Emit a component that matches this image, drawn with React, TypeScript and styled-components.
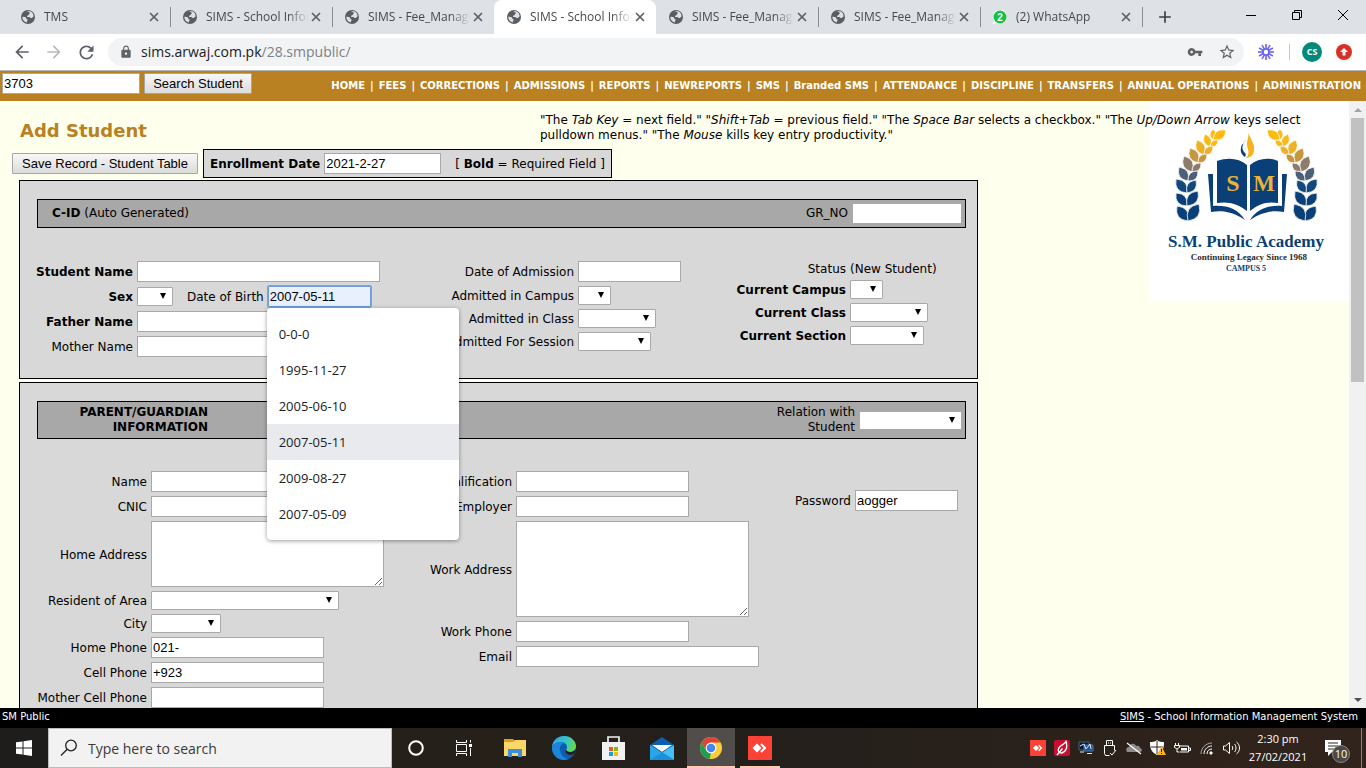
import React from "react";
import styled, { createGlobalStyle, css } from "styled-components";
import { FiX } from "react-icons/fi";
import { MdLock, MdVpnKey, MdStarBorder, MdArrowBack, MdArrowForward, MdRefresh, MdAdd } from "react-icons/md";

const page = `"DejaVu Sans", Verdana, sans-serif`;
const system = `"Open Sans", "Segoe UI", sans-serif`;
const control = `"Liberation Sans", Arial, sans-serif`;
const brown = "#b98121";
const navy = "#0a3f78";

const GlobalStyle = createGlobalStyle`
  * { box-sizing: border-box; }
  body { margin: 0; font-family: ${page}; font-size: 12px; color: #000; }
  button, input, select, textarea { font-family: ${control}; font-size: 13px; }
`;

const Screen = styled.div`
  display: flex;
  flex-direction: column;
  height: 100vh;
  overflow: hidden;
`;

/* ---------- Browser chrome ---------- */

const TabStrip = styled.header`
  display: flex;
  flex: none;
  height: 34px;
  padding-left: 8px;
  background: #dee1e6;
  font-family: ${system};
`;

const TabItem = styled.div<{ $active?: boolean; $divided?: boolean }>`
  position: relative;
  display: flex;
  align-items: center;
  flex: 0 1 162px;
  min-width: 0;
  padding: 0 8px 0 13px;
  ${(p) => p.$active && css`background: #fff; border-radius: 8px 8px 0 0;`}
  ${(p) => p.$divided && css`
    &::after {
      content: "";
      position: absolute;
      right: -1px;
      top: 7px;
      height: 20px;
      width: 1px;
      background: #8a8d92;
    }
  `}
`;

const TabTitle = styled.span`
  flex: 1;
  min-width: 0;
  margin-left: 9px;
  overflow: hidden;
  white-space: nowrap;
  font-size: 12px;
  line-height: 16px;
  color: #45494d;
  mask-image: linear-gradient(to right, #000 80%, transparent);
`;

const IconButton = styled.button<{ $size?: number; $color?: string }>`
  display: flex;
  align-items: center;
  justify-content: center;
  flex: none;
  width: ${(p) => p.$size ?? 16}px;
  height: ${(p) => p.$size ?? 16}px;
  padding: 0;
  border: 0;
  background: none;
  color: ${(p) => p.$color ?? "#5f6368"};
`;

const NewTab = styled(IconButton)`
  margin: 5px 0 0 11px;
`;

const WindowButtons = styled.div`
  display: flex;
  margin-left: auto;
`;

const WindowButton = styled.button`
  width: 46px;
  height: 30px;
  padding: 0;
  border: 0;
  background: none;
`;

const Toolbar = styled.div`
  display: flex;
  align-items: center;
  flex: none;
  height: 37px;
  padding: 0 8px 0 10px;
  gap: 8px;
  background: #fff;
  border-bottom: 1px solid #b3b5b8;
`;

const Omnibox = styled.div`
  display: flex;
  align-items: center;
  flex: 1;
  height: 28px;
  margin-left: 2px;
  padding: 0 1px 0 11px;
  border-radius: 14px;
  background: #f1f3f4;
  color: #5f6368;
`;

const Address = styled.span`
  flex: 1;
  margin-left: 8px;
  font: 14px/20px ${system};
  color: #7d8186;
  b { font-weight: 400; color: #202124; }
`;

const ToolDivider = styled.span`
  width: 1px;
  height: 16px;
  margin: 0 4px 0 1px;
  background: #c6c8cb;
`;

const Avatar = styled.span`
  display: flex;
  align-items: center;
  justify-content: center;
  width: 20px;
  height: 20px;
  border-radius: 50%;
  background: #00897b;
  color: #fff;
  font: 700 9px/20px ${system};
`;

/* ---------- Site header ---------- */

const SiteHeader = styled.div`
  display: flex;
  align-items: flex-start;
  flex: none;
  height: 30px;
  padding: 2px 5px 0 2px;
  background: ${brown};
`;

const SiteNav = styled.nav`
  margin-left: auto;
  padding-top: 6px;
  font-size: 10px;
  font-weight: 700;
  line-height: 14px;
  color: #fff;
  white-space: nowrap;
  a { color: #fff; text-decoration: none; }
`;

const NavDivider = styled.span`
  margin: 0 5px;
`;

const TextInput = styled.input<{ $w: number; $focused?: boolean }>`
  width: ${(p) => p.$w}px;
  height: 21px;
  padding: 0 1px;
  border: 1px solid #a9a9a9;
  background: #fff;
  color: #000;
  ${(p) => p.$focused && css`
    border-color: #6f9ae0;
    outline: 1px solid #76a3e8;
    border-radius: 1px;
    background: #e8f0fe;
  `}
`;

const PushButton = styled.button<{ $w: number }>`
  width: ${(p) => p.$w}px;
  height: 21px;
  padding: 0;
  border: 1px solid #a6a6a6;
  border-radius: 1px;
  background: linear-gradient(#f7f7f7, #dcdcdc);
  color: #000;
  white-space: nowrap;
`;

const SearchButton = styled(PushButton)`
  margin-left: 4px;
`;

/* ---------- Page ---------- */

const Viewport = styled.div`
  display: flex;
  flex: 1;
  min-height: 0;
  background: #ffffee;
`;

const Page = styled.main`
  position: relative;
  flex: 1;
  min-width: 0;
  overflow: hidden;
  padding: 12px 19px 0 12px;
`;

const Crest = styled.svg`
  position: absolute;
  top: 0;
  right: 0;
  width: 200px;
  height: 200px;
`;

const PageHead = styled.div`
  position: relative;
  display: flex;
  height: 36px;
`;

const Title = styled.h1`
  flex: 0 0 528px;
  margin: 0;
  padding: 7px 0 0 8px;
  font-size: 18px;
  line-height: 22px;
  color: ${brown};
`;

const Hints = styled.p`
  margin: 0;
  line-height: 15px;
`;

const SaveRow = styled.div`
  display: flex;
  align-items: center;
  gap: 5px;
  margin-bottom: 2px;
`;

const Enrollment = styled.div`
  display: flex;
  align-items: center;
  gap: 4px;
  padding: 3px 6px;
  border: 1px solid #000;
  background: #d8d8d8;
`;

const RequiredNote = styled.span`
  margin-left: 10px;
`;

const Section = styled.section<{ $gap: number }>`
  display: flex;
  flex-direction: column;
  gap: ${(p) => p.$gap}px;
  max-width: 959px;
  margin: 0 0 3px 7px;
  padding: 18px 11px 21px 17px;
  border: 1px solid #000;
  background: #d8d8d8;
`;

const Bar = styled.div`
  display: flex;
  align-items: center;
  gap: 4px;
  padding: 3px 3px 3px 4px;
  border: 1px solid #000;
  background: #a8a8a8;
  line-height: 15px;
`;

const BarTitle = styled.span<{ $w?: number; $inset?: number }>`
  ${(p) => p.$w && css`width: ${p.$w}px; text-align: right;`}
  margin-right: auto;
  padding-left: ${(p) => p.$inset ?? 0}px;
`;

const BarLabel = styled.label<{ $w?: number }>`
  ${(p) => p.$w && css`width: ${p.$w}px;`}
  text-align: right;
`;

const Columns = styled.div<{ $cols: string }>`
  display: grid;
  grid-template-columns: ${(p) => p.$cols};
  align-items: start;
`;

const Fields = styled.div<{ $label: number; $offset?: number }>`
  display: grid;
  grid-template-columns: ${(p) => p.$label}px auto;
  gap: 4px;
  align-items: center;
  justify-content: start;
  padding-top: ${(p) => p.$offset ?? 0}px;
`;

const Label = styled.label<{ $bold?: boolean }>`
  justify-self: end;
  padding-top: 2px;
  line-height: 15px;
  white-space: nowrap;
  font-weight: ${(p) => (p.$bold ? 700 : 400)};
`;

const Plain = styled.span<{ $right?: boolean }>`
  padding-top: 1px;
  line-height: 14px;
  ${(p) => p.$right && css`justify-self: end;`}
`;

const Inline = styled.div`
  display: flex;
  align-items: center;
  gap: 4px;
`;

const BirthLabel = styled(Label)`
  margin-left: 10px;
`;

const SelectBox = styled.span<{ $w: number }>`
  position: relative;
  display: block;
  width: ${(p) => p.$w}px;
  height: 19px;
  &::after {
    content: "";
    position: absolute;
    right: 7px;
    top: 6px;
    border: 3px solid transparent;
    border-top: 6px solid #000;
    border-bottom: 0;
  }
`;

const NativeSelect = styled.select`
  appearance: none;
  display: block;
  width: 100%;
  height: 19px;
  padding: 0 4px;
  border: 1px solid #a9a9a9;
  border-radius: 1px;
  background: #fff;
`;

const TextBox = styled.textarea<{ $w: number; $h: number }>`
  display: block;
  width: ${(p) => p.$w}px;
  height: ${(p) => p.$h}px;
  border: 1px solid #a9a9a9;
  resize: both;
`;

const Anchor = styled.div`
  position: relative;
  display: flex;
`;

const Suggestions = styled.ul`
  position: absolute;
  z-index: 2;
  top: 22px;
  left: -1px;
  width: 192px;
  margin: 0;
  padding: 8px 0;
  list-style: none;
  border-radius: 4px;
  background: #fff;
  box-shadow: 0 1px 4px rgba(0, 0, 0, 0.4);
`;

const Suggestion = styled.li<{ $hot?: boolean }>`
  padding: 0 12px;
  font: 13px/36px ${system};
  color: #202124;
  background: ${(p) => (p.$hot ? "#e8eaed" : "transparent")};
`;

const Scrollbar = styled.div`
  display: flex;
  flex-direction: column;
  align-items: center;
  justify-content: space-between;
  flex: none;
  width: 17px;
  background: #f1f1f1;
`;

const ScrollTrack = styled.div`
  flex: 1;
  width: 13px;
`;

const ScrollThumb = styled.div`
  height: 46%;
  background: #c1c1c1;
`;

const ScrollArrow = styled.span<{ $down?: boolean }>`
  height: 17px;
  padding-top: 7px;
  &::before {
    content: "";
    display: block;
    border: 4px solid transparent;
    ${(p) =>
      p.$down
        ? css`border-top-color: #505050; border-bottom: 0;`
        : css`border-bottom-color: #a3a3a3; border-top: 0;`}
  }
`;

const StatusBar = styled.footer`
  display: flex;
  justify-content: space-between;
  flex: none;
  height: 20px;
  padding: 0 8px 0 2px;
  background: #000;
  color: #fff;
  font-size: 10px;
  line-height: 17px;
  a { color: #fff; }
`;

/* ---------- Taskbar ---------- */

const Taskbar = styled.div`
  display: flex;
  flex: none;
  height: 40px;
  background: linear-gradient(90deg, #1e1d1c, #262019 35%, #231f1b 55%, #32241c);
  font-family: ${system};
  color: #fff;
`;

const TaskButton = styled.button<{ $active?: boolean }>`
  position: relative;
  display: flex;
  align-items: center;
  justify-content: center;
  flex: none;
  width: 48px;
  height: 40px;
  padding: 0;
  border: 0;
  background: ${(p) => (p.$active ? "#514d4a" : "none")};
`;

const Running = styled.span<{ $wide?: boolean }>`
  position: absolute;
  bottom: 0;
  left: ${(p) => (p.$wide ? 0 : 4)}px;
  right: ${(p) => (p.$wide ? 0 : 4)}px;
  height: 2px;
  background: #ffc9b3;
`;

const Pinned = styled.div`
  display: flex;
  gap: 1px;
  margin-left: 3px;
`;

const TaskSearch = styled.label`
  display: flex;
  align-items: center;
  flex: 0 1 344px;
  min-width: 0;
  padding: 0 11px;
  gap: 10px;
  border: 1px solid #bcbcbc;
  background: #f2f2f2;
  color: #222;
`;

const TaskSearchInput = styled.input`
  flex: 1;
  min-width: 0;
  padding: 0;
  border: 0;
  background: none;
  font-family: ${system};
  font-size: 14px;
  &::placeholder { color: #3a3a3a; opacity: 1; }
`;

const Tray = styled.div`
  display: flex;
  align-items: center;
  gap: 8px;
  margin-left: auto;
  svg { display: block; }
`;

const Clock = styled.div`
  width: 60px;
  text-align: center;
  white-space: nowrap;
  font-size: 11px;
  line-height: 18px;
`;

const Notices = styled.div`
  width: 46px;
  height: 40px;
  padding: 8px 0 0 9px;
  border-right: 1px solid #8b817a;
  margin-right: 4px;
`;

/* ---------- Drawings ---------- */

const Globe = () => (
  <svg width="14" height="14" viewBox="0 0 14 14">
    <circle cx="7" cy="7" r="7" fill="#5a5e63" />
    <path d="M6.2 1.300C7 2.300 8 1.700 8.600 2.600c.5 1-.6 1.300-.8 2.100-.3.900-1.900.5-1.900 1.500 0 .8 1.600.6 2.300.9 1 .4 1.200 1.100 2.300 1 .9-.1.800-1.500 2-1.400.4-3-1.900-5.600-4.800-5.700Z" fill="#dee1e6" />
    <path d="M1.300 6.800c1.300.1 2.600.1 3.500.7.8.6.300 1.400 1.200 1.800.9.300.8 1 .3 1.500-.5.600-.5 1-.4 1.700C3.100 12 1.300 9.600 1.300 6.800Z" fill="#dee1e6" />
  </svg>
);

const WhatsAppBadge = () => (
  <svg width="14" height="14" viewBox="0 0 14 14">
    <path d="M0 14 1 10.300A7 7 0 1 1 4 13Z" fill="#fff" />
    <circle cx="7" cy="7" r="6.500" fill="#13c143" />
    <text x="7" y="10.500" fontSize="10" fontWeight="700" fill="#fff" textAnchor="middle" fontFamily="Liberation Sans">2</text>
  </svg>
);

/* Each pair of leaves: stem point, tip of the outer leaf, tip of the inner leaf, colour. */
const leafPairs: [number, number, number, number, number, number, string][] = [
  [39, 120, 28, 105, 50, 103, "#0a3f78"],
  [38, 105, 27, 92, 49, 90, "#0a3f78"],
  [38, 92, 27, 78, 47, 79, "#12487c"],
  [39, 80, 30, 66, 49, 70, "#4c6078"],
  [43, 71, 35, 55, 52, 62, "#8d7c6c"],
  [49, 62, 41, 47, 58, 53, "#c4983f"],
  [55, 54, 48, 39, 64, 45, "#efb025"],
  [61, 46, 56, 33, 69, 39, "#fab917"],
  [64, 39, 64, 28, 77, 29, "#fdbb10"],
];

const leafPath = (x: number, y: number, tx: number, ty: number) => {
  const mx = (x + tx) / 2, my = (y + ty) / 2, dx = (tx - x) * 0.55, dy = (ty - y) * 0.55;
  return `M${x} ${y}Q${mx - dy} ${my + dx} ${tx} ${ty}Q${mx + dy} ${my - dx} ${x} ${y}Z`;
};

const Laurel = () => (
  <g stroke="#fff" strokeWidth="0.8">
    {[...leafPairs].reverse().map(([x, y, ox, oy, ix, iy, color]) => (
      <g key={y} fill={color}>
        <path d={leafPath(x, y, ox, oy)} />
        <path d={leafPath(x, y, ix, iy)} />
      </g>
    ))}
  </g>
);

const SchoolCrest = () => (
  <Crest viewBox="0 0 200 200" role="img" aria-label="S.M. Public Academy">
    <rect width="200" height="200" fill="#fff" />
    <Laurel />
    <g transform="translate(195 0) scale(-1 1)"><Laurel /></g>
    <path d="M99 32c4 8 7 12 6 18-1 5-5 7-8 7 5-5 1-9 1-14 0-4 2-7 1-11Z" fill="#f6b319" />
    <path d="M97 39c-4 5-5 9-1 13 1 1 1 2 0 4-3-2-5-5-4-9 0-4 4-5 5-8Z" fill={navy} />
    <path d="M68 60c11-4 22-3 30 4v46c-8-7-19-10-30-8ZM101 64c8-7 19-8 28-4v42c-11-2-20 1-28 8Z" fill={navy} />
    <path d="M59 73h5v32c14-1 25 3 32 14-12-8-22-10-34-8ZM138 73h-5v32c-14-1-25 3-32 14 12-8 22-10 34-8Z" fill={navy} />
    <g fontFamily="Liberation Serif" fontWeight="700" textAnchor="middle">
      <text x="84" y="90" fontSize="24" fill="#e8b33a">S</text>
      <text x="115" y="90" fontSize="23" fill="#e8b33a">M</text>
      <text x="97" y="146" fontSize="17" fill={navy}>S.M. Public Academy</text>
      <text x="100" y="159" fontSize="9" fill="#2b2b2b">Continuing Legacy Since 1968</text>
      <text x="97" y="170" fontSize="8" fill={navy}>CAMPUS 5</text>
    </g>
  </Crest>
);

const AnyDesk = ({ size }: { size: number }) => (
  <svg width={size} height={size} viewBox="0 0 24 24">
    <rect width="24" height="24" fill="#fb4236" />
    <path d="m9 7.500 4.500 4.500-4.500 4.500L4.500 12Z" fill="#fff" />
    <path d="m13 8 4 4-4 4" fill="none" stroke="#fff" strokeWidth="2" />
  </svg>
);

const Explorer = () => (
  <svg width="22" height="18" viewBox="0 0 22 18">
    <path d="M0 0h9l2 2h10v14H0Z" fill="#e5a00d" />
    <path d="M0 3h9l2-2h11v16H0Z" fill="#fbd669" />
    <path d="M4 18v-8h14v8h-4v-4H8v4Z" fill="#3d8fd6" />
  </svg>
);

const Edge = () => (
  <svg width="24" height="24" viewBox="0 0 24 24">
    <defs>
      <linearGradient id="edgeTop" x1="0" x2="1" y1=".2" y2=".5">
        <stop offset="0" stopColor="#2fa8e8" />
        <stop offset=".55" stopColor="#35c3c9" />
        <stop offset="1" stopColor="#63dc4f" />
      </linearGradient>
    </defs>
    <circle cx="12" cy="12" r="12" fill="#0f5cae" />
    <path d="M0 12C0 5 5 0 12 0s12 5 12 10c0 4-3 6-6 6-3 0-4-1-4-2s1-1 1-3c0-3-3-5-6-5-5 0-9 3-9 6Z" fill="url(#edgeTop)" />
    <path d="M0 12c1-4 5-6 9-6 1 0 3 .500 4 1.500C9 7 7 11 8 15c1 4 4 7 8 8.300C8 26 0 20 0 12Z" fill="#1b86d8" />
    <path d="M14.300 13.500c0 1.600 1.700 2.500 3.700 2.500 3 0 5-1.500 6-3.500-.2 2.500-1 4-2 5.500-4 2-9 .5-8.500-3.500Z" fill="#24211c" />
  </svg>
);

const Store = () => (
  <svg width="23" height="24" viewBox="0 0 23 24">
    <path d="M6 7V1h11v6" fill="none" stroke="#f1f1f1" strokeWidth="1.700" />
    <path d="M0 6h23v18H0Z" fill="#f1f1f1" />
    <path d="M7 11h4v4H7Z" fill="#f35325" /><path d="M12 11h4v4h-4Z" fill="#81bc06" />
    <path d="M7 16h4v4H7Z" fill="#05a6f0" /><path d="M12 16h4v4h-4Z" fill="#ffba08" />
  </svg>
);

const Mail = () => (
  <svg width="24" height="23" viewBox="0 0 24 23">
    <path d="M0 8 12 0l12 8v5H0Z" fill="#0b5fae" />
    <path d="M2 8h20l-10 7Z" fill="#f4f8fb" />
    <path d="M0 8 24 23H0Z" fill="#2aa5ea" />
    <path d="M24 8v15L12 15.500Z" fill="#41c1f5" />
    <path d="m0 23 12-7.500L24 23Z" fill="#1b90dd" />
  </svg>
);

const Chrome = () => (
  <svg width="22" height="22" viewBox="0 0 22 22">
    <circle cx="11" cy="11" r="11" fill="#fccd3b" />
    <path d="M1.500 5.500A11 11 0 0 1 20.500 5.500H11L6.200 13.700Z" fill="#dc4437" />
    <path d="M1.500 5.500 6.200 13.700 11 16.500l-.9 5.500A11 11 0 0 1 1.500 5.500Z" fill="#1b9d57" />
    <path d="m11 16.500 4.800-2.700L10.500 22h-.9Z" fill="#fccd3b" />
    <circle cx="11" cy="11" r="5.400" fill="#fff" />
    <circle cx="11" cy="11" r="4.300" fill="#4486f4" />
  </svg>
);

/* ---------- Pieces ---------- */

const Select = ({ id, w, label }: { id: string; w: number; label?: string }) => (
  <SelectBox $w={w}>
    <NativeSelect id={id} aria-label={label} defaultValue=""><option value="" /></NativeSelect>
  </SelectBox>
);

type FieldProps = { id: string; label: string; bold?: boolean; children: React.ReactNode };
const Field = ({ id, label, bold, children }: FieldProps) => (
  <>
    <Label htmlFor={id} $bold={bold}>{label}</Label>
    {children}
  </>
);

const tabs = [
  { title: "TMS", divided: true },
  { title: "SIMS - School Information", divided: true },
  { title: "SIMS - Fee_Management" },
  { title: "SIMS - School Information", active: true },
  { title: "SIMS - Fee_Management", divided: true },
  { title: "SIMS - Fee_Management", divided: true },
  { title: "(2) WhatsApp", divided: true, whatsapp: true },
];

const navItems = [
  "HOME", "FEES", "CORRECTIONS", "ADMISSIONS", "REPORTS", "NEWREPORTS", "SMS", "Branded SMS",
  "ATTENDANCE", "DISCIPLINE", "TRANSFERS", "ANNUAL OPERATIONS", "ADMINISTRATION",
];

const birthDates = ["0-0-0", "1995-11-27", "2005-06-10", "2007-05-11", "2009-08-27", "2007-05-09"];

export default function App() {
  return (
    <Screen>
      <GlobalStyle />
      <TabStrip>
        {tabs.map((t, i) => (
          <TabItem key={i} $active={t.active} $divided={t.divided}>
            {t.whatsapp ? <WhatsAppBadge /> : <Globe />}
            <TabTitle>{t.title}</TabTitle>
            <IconButton aria-label="Close tab"><FiX size={14} strokeWidth={3} /></IconButton>
          </TabItem>
        ))}
        <NewTab $size={24} $color="#3c4043" aria-label="New tab"><MdAdd size={20} /></NewTab>
        <WindowButtons>
          <WindowButton aria-label="Minimise">
            <svg width="10" height="10"><path d="M0 5.500h10" stroke="#000" /></svg>
          </WindowButton>
          <WindowButton aria-label="Restore">
            <svg width="10" height="10" fill="none" stroke="#000"><path d="M.5 2.500h7v7h-7ZM2.500 2.500v-2h7v7h-2" /></svg>
          </WindowButton>
          <WindowButton aria-label="Close">
            <svg width="10" height="10"><path d="m0 0 10 10M10 0 0 10" stroke="#000" /></svg>
          </WindowButton>
        </WindowButtons>
      </TabStrip>

      <Toolbar>
        <IconButton $size={24} aria-label="Back"><MdArrowBack size={20} /></IconButton>
        <IconButton $size={24} $color="#b9bbbe" aria-label="Forward"><MdArrowForward size={20} /></IconButton>
        <IconButton $size={24} aria-label="Reload"><MdRefresh size={21} /></IconButton>
        <Omnibox>
          <MdLock size={14} />
          <Address><b>sims.arwaj.com.pk</b>/28.smpublic/</Address>
          <IconButton $size={32} aria-label="Passwords"><MdVpnKey size={16} /></IconButton>
          <IconButton $size={32} aria-label="Bookmark"><MdStarBorder size={18} /></IconButton>
        </Omnibox>
        <IconButton $size={28} $color="#6a63f0" aria-label="Extension">
          <svg width="16" height="16" viewBox="-8 -8 16 16" stroke="currentColor" strokeWidth="1.600">
            {[0, 30, 60, 90, 120, 150, 180, 210, 240, 270, 300, 330].map((a) => (
              <path key={a} d="M0-3V-8" transform={`rotate(${a})`} />
            ))}
            <circle r="3" fill="none" />
          </svg>
        </IconButton>
        <ToolDivider />
        <Avatar>CS</Avatar>
        <IconButton $size={28} aria-label="Update">
          <svg width="16" height="16" viewBox="0 0 16 16">
            <circle cx="8" cy="8" r="8" fill="#d93025" />
            <path d="m8 4 4 4H9.500v3.500h-3V8H4Z" fill="#fff" />
          </svg>
        </IconButton>
      </Toolbar>

      <SiteHeader>
        <TextInput $w={138} defaultValue="3703" aria-label="Student number" />
        <SearchButton $w={108}>Search Student</SearchButton>
        <SiteNav>
          {navItems.map((n, i) => (
            <React.Fragment key={n}>
              {i > 0 && <NavDivider>|</NavDivider>}
              <a href="#">{n}</a>
            </React.Fragment>
          ))}
        </SiteNav>
      </SiteHeader>

      <Viewport>
        <Page>
          <SchoolCrest />
          <PageHead>
            <Title>Add Student</Title>
            <Hints>
              "The <i>Tab Key</i> = next field." "<i>Shift+Tab</i> = previous field." "The <i>Space Bar</i> selects a
              checkbox." "The <i>Up/Down Arrow</i> keys select pulldown menus." "The <i>Mouse</i> kills key entry
              productivity."
            </Hints>
          </PageHead>

          <SaveRow>
            <PushButton $w={186}>Save Record - Student Table</PushButton>
            <Enrollment>
              <Label htmlFor="enrollment" $bold>Enrollment Date</Label>
              <TextInput $w={117} id="enrollment" defaultValue="2021-2-27" />
              <RequiredNote>[ <b>Bold</b> = Required Field ]</RequiredNote>
            </Enrollment>
          </SaveRow>

          <Section $gap={33}>
            <Bar>
              <BarTitle $inset={10}><b>C-ID</b> (Auto Generated)</BarTitle>
              <BarLabel htmlFor="grno">GR_NO</BarLabel>
              <TextInput $w={110} id="grno" />
            </Bar>
            <Columns $cols="410px 286px 1fr">
              <Fields $label={96}>
                <Field id="student" label="Student Name" bold><TextInput $w={243} id="student" /></Field>
                <Field id="sex" label="Sex" bold>
                  <Inline>
                    <Select id="sex" w={36} />
                    <BirthLabel htmlFor="dob">Date of Birth</BirthLabel>
                    <Anchor>
                      <TextInput $w={103} $focused id="dob" defaultValue="2007-05-11" />
                      <Suggestions>
                        {birthDates.map((d) => <Suggestion key={d} $hot={d === "2007-05-11"}>{d}</Suggestion>)}
                      </Suggestions>
                    </Anchor>
                  </Inline>
                </Field>
                <Field id="father" label="Father Name" bold><TextInput $w={243} id="father" /></Field>
                <Field id="mother" label="Mother Name"><TextInput $w={243} id="mother" /></Field>
              </Fields>
              <Fields $label={127}>
                <Field id="admission" label="Date of Admission"><TextInput $w={103} id="admission" /></Field>
                <Field id="inCampus" label="Admitted in Campus"><Select id="inCampus" w={33} /></Field>
                <Field id="inClass" label="Admitted in Class"><Select id="inClass" w={78} /></Field>
                <Field id="session" label="Admitted For Session"><Select id="session" w={73} /></Field>
              </Fields>
              <Fields $label={113}>
                <Plain $right>Status</Plain>
                <Plain>(New Student)</Plain>
                <Field id="campus" label="Current Campus" bold><Select id="campus" w={33} /></Field>
                <Field id="class" label="Current Class" bold><Select id="class" w={78} /></Field>
                <Field id="section" label="Current Section" bold><Select id="section" w={74} /></Field>
              </Fields>
            </Columns>
          </Section>

          <Section $gap={32}>
            <Bar>
              <BarTitle $w={166}><b>PARENT/GUARDIAN INFORMATION</b></BarTitle>
              <BarLabel $w={90} htmlFor="relation">Relation with Student</BarLabel>
              <Select id="relation" w={103} />
            </Bar>
            <Columns $cols="390px 363px 1fr">
              <Fields $label={110}>
                <Field id="name" label="Name"><TextInput $w={173} id="name" /></Field>
                <Field id="cnic" label="CNIC"><TextInput $w={173} id="cnic" /></Field>
                <Field id="home" label="Home Address"><TextBox $w={233} $h={66} id="home" /></Field>
                <Field id="area" label="Resident of Area"><Select id="area" w={188} /></Field>
                <Field id="city" label="City"><Select id="city" w={70} /></Field>
                <Field id="homePhone" label="Home Phone"><TextInput $w={173} id="homePhone" defaultValue="021-" /></Field>
                <Field id="cell" label="Cell Phone"><TextInput $w={173} id="cell" defaultValue="+923" /></Field>
                <Field id="motherCell" label="Mother Cell Phone"><TextInput $w={173} id="motherCell" /></Field>
              </Fields>
              <Fields $label={85}>
                <Field id="qualification" label="Qualification"><TextInput $w={173} id="qualification" /></Field>
                <Field id="employer" label="Employer"><TextInput $w={173} id="employer" /></Field>
                <Field id="work" label="Work Address"><TextBox $w={233} $h={96} id="work" /></Field>
                <Field id="workPhone" label="Work Phone"><TextInput $w={173} id="workPhone" /></Field>
                <Field id="email" label="Email"><TextInput $w={243} id="email" /></Field>
              </Fields>
              <Fields $label={61} $offset={19}>
                <Field id="password" label="Password"><TextInput $w={103} id="password" defaultValue="aogger" /></Field>
              </Fields>
            </Columns>
          </Section>
        </Page>
        <Scrollbar>
          <ScrollArrow />
          <ScrollTrack><ScrollThumb /></ScrollTrack>
          <ScrollArrow $down />
        </Scrollbar>
      </Viewport>

      <StatusBar>
        <span>SM Public</span>
        <span><a href="#">SIMS</a> - School Information Management System</span>
      </StatusBar>

      <Taskbar>
        <TaskButton aria-label="Start">
          <svg width="16" height="16" viewBox="0 0 16 16" fill="#fff">
            <path d="M0 2.300 6.500 1.400v6.200H0ZM7.500 1.200 16 0v7.600H7.500ZM0 8.400h6.500v6.200L0 13.700ZM7.500 8.400H16V16l-8.500-1.200Z" />
          </svg>
        </TaskButton>
        <TaskSearch>
          <svg width="18" height="18" viewBox="0 0 18 18" fill="none" stroke="#222" strokeWidth="1.300">
            <circle cx="11" cy="6.500" r="5.300" /><path d="M7.200 10.300 1 16.500" />
          </svg>
          <TaskSearchInput placeholder="Type here to search" aria-label="Search" />
        </TaskSearch>
        <TaskButton aria-label="Cortana">
          <svg width="16" height="16"><circle cx="8" cy="8" r="6.800" fill="none" stroke="#fff" strokeWidth="2" /></svg>
        </TaskButton>
        <TaskButton aria-label="Task view">
          <svg width="17" height="16" viewBox="0 0 17 16" fill="none" stroke="#fff">
            <path d="M.5 0v2.500h10V0M.5 4.500h10v7H.5ZM.5 16v-2.500h10V16M14.500 0v2.500M14.500 8v8" />
            <path d="M13 4h3v3h-3Z" fill="#fff" stroke="none" />
          </svg>
        </TaskButton>
        <Pinned>
          <TaskButton aria-label="File Explorer"><Explorer /></TaskButton>
          <TaskButton aria-label="Edge"><Edge /></TaskButton>
          <TaskButton aria-label="Store"><Store /></TaskButton>
          <TaskButton aria-label="Mail"><Mail /></TaskButton>
          <TaskButton aria-label="Chrome" $active><Chrome /><Running $wide /></TaskButton>
          <TaskButton aria-label="AnyDesk"><AnyDesk size={24} /><Running /></TaskButton>
        </Pinned>
        <Tray>
          <AnyDesk size={16} />
          <svg width="16" height="16" viewBox="0 0 16 16">
            <rect width="16" height="16" rx="2" fill="#c8102e" />
            <path d="M12 1.500c2 6-.5 11-4.500 11.500C4 13 3.500 9.500 5.500 7c2-2.300 5-2.500 6.500-5.500ZM3 15 8.500 8.500" fill="none" stroke="#fff" strokeWidth="1.400" />
          </svg>
          <svg width="16" height="16" viewBox="0 0 16 16">
            <path d="M1 2h10v8H1Z" fill="#0b1930" stroke="#45607f" />
            <path d="M6 5h9v6H6Z" fill="#14539f" stroke="#5c7593" />
            <path d="M2 6 6 4l2 5 4-5 1 5M9 13.500h5M2 12h4" stroke="#dcecff" fill="none" />
          </svg>
          <svg width="16" height="16" viewBox="0 0 16 16" fill="none" stroke="#fff">
            <path d="M4.500 5.500v-5h6v5M2.500 5.500h10v5M2.500 5.500v8l1 2h4M6 3h1M8 3h1M8 13l2 2 4-5" />
          </svg>
          <svg width="16" height="16" viewBox="0 0 16 16">
            <path d="M1 12c-2-3 0-5 2-5 1-4 6-4 7-1 3-1 4 1 4 2 3 1 2 4 0 4Z" fill="#8f8b88" />
            <path d="m1 3 14 11" stroke="#fff" strokeWidth="1.200" />
          </svg>
          <svg width="16" height="16" viewBox="0 0 16 16">
            <path d="M7 0c2 2 5 2 7 2 0 6-1 10-7 13C1 12 0 8 0 2c2 0 5 0 7-2Z" fill="#fff" />
            <path d="M7 1v13M1 7h12" stroke="#32241c" />
            <path d="m11.500 6 4.500 9H7Z" fill="#fbb416" /><path d="M11.500 9v3M11.500 13v1" stroke="#222" />
          </svg>
          <svg width="17" height="16" viewBox="0 0 17 16" fill="none" stroke="#fff">
            <path d="M5.500 6h9v6h-9M15 8h1.500v2.500H15" /><path d="M7 8h6v2.500H7Z" fill="#fff" stroke="none" />
            <path d="M1.500 3v2M4.500 3v2M.5 5.500h5v2l-2 1h-1l-2-1ZM3 9v3h2" />
          </svg>
          <svg width="16" height="16" viewBox="0 0 16 16" fill="none" stroke="#fff">
            <path d="M2 14C2 8 7 3 13 3" opacity=".6" /><path d="M5 14c0-5 4-8 8-8M8 14c0-3 2-5 5-5" />
            <path d="M11 12h2v2h-2Z" fill="#fff" />
          </svg>
          <svg width="17" height="16" viewBox="0 0 17 16" fill="none" stroke="#fff">
            <path d="M.5 6v4h2l4 3.500v-11L2.500 6ZM9 6c1 1 1 3 0 4M11.500 4c2 2 2 6 0 8M13.500 2c4 3 4 9 0 12" />
          </svg>
          <Clock>2:30 pm<br />27/02/2021</Clock>
          <Notices>
            <svg width="26" height="28" viewBox="0 0 26 28">
              <path d="M0 4h16v12H7l-4 4v-4H0Z" fill="#fff" />
              <path d="M3 7h10M3 10h10M3 13h10" stroke="#32241c" />
              <circle cx="16" cy="18" r="8.500" fill="#4a4745" stroke="#8a8684" />
              <text x="16" y="22" textAnchor="middle" fontSize="11" fill="#fff" fontFamily="Open Sans">10</text>
            </svg>
          </Notices>
        </Tray>
      </Taskbar>
    </Screen>
  );
}
